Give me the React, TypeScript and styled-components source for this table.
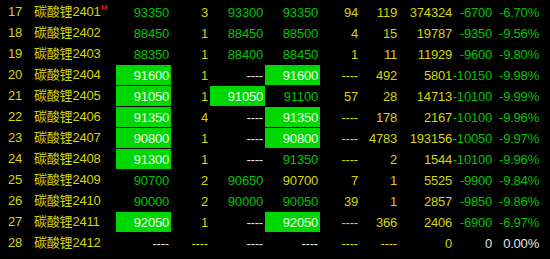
import React from 'react';
import styled, { createGlobalStyle } from 'styled-components';

const GlobalStyle = createGlobalStyle`
  body {
    margin: 0;
    background: #000;
  }
`;

type Tone = 'y' | 'g' | 'w' | 'box';

const colors: Record<Tone, string> = {
  y: '#d6d600',
  g: '#00c400',
  w: '#e6e6e6',
  box: '#f0fff0',
};

const Board = styled.div`
  padding-top: 2px;
  font-family: 'Liberation Sans', 'Noto Sans CJK SC', sans-serif;
  font-size: 13px;
  letter-spacing: -0.2px;
  background: #000;
  width: 550px;
  height: 259px;
  overflow: hidden;
`;

const Row = styled.div`
  display: grid;
  grid-template-columns: 34px 82px 55px 39px 55px 55px 40px 39px 55px 40px 47px;
  height: 20px;
  margin-bottom: 1px;
`;

const NoCell = styled.div`
  padding-left: 8px;
  line-height: 20px;
  color: ${colors.y};
`;

const NameCell = styled.div`
  position: relative;
  line-height: 20px;
  color: ${colors.y};
  white-space: nowrap;
`;

const Mark = styled.span`
  position: absolute;
  left: 67px;
  top: -4px;
  font-size: 8px;
  font-weight: bold;
  letter-spacing: 0;
  color: #e01010;
`;

const Cell = styled.div<{ $tone: Tone }>`
  display: flex;
  justify-content: flex-end;
  align-items: center;
  padding-right: 2px;
  white-space: nowrap;
  color: ${(p) => colors[p.$tone]};
  background: ${(p) => (p.$tone === 'box' ? '#00d600' : 'transparent')};
`;

type C = [string, Tone];

interface Line {
  no: number;
  name: string;
  mark?: boolean;
  cells: C[];
}

const D = '----';

const rows: Line[] = [
  { no: 17, name: '碳酸锂2401', mark: true, cells: [['93350', 'g'], ['3', 'y'], ['93300', 'g'], ['93350', 'g'], ['94', 'y'], ['119', 'y'], ['374324', 'y'], ['-6700', 'g'], ['-6.70%', 'g']] },
  { no: 18, name: '碳酸锂2402', cells: [['88450', 'g'], ['1', 'y'], ['88450', 'g'], ['88500', 'g'], ['4', 'y'], ['15', 'y'], ['19787', 'y'], ['-9350', 'g'], ['-9.56%', 'g']] },
  { no: 19, name: '碳酸锂2403', cells: [['88350', 'g'], ['1', 'y'], ['88400', 'g'], ['88450', 'g'], ['1', 'y'], ['11', 'y'], ['11929', 'y'], ['-9600', 'g'], ['-9.80%', 'g']] },
  { no: 20, name: '碳酸锂2404', cells: [['91600', 'box'], ['1', 'y'], [D, 'w'], ['91600', 'box'], [D, 'y'], ['492', 'y'], ['5801', 'y'], ['-10150', 'g'], ['-9.98%', 'g']] },
  { no: 21, name: '碳酸锂2405', cells: [['91050', 'box'], ['1', 'y'], ['91050', 'box'], ['91100', 'g'], ['57', 'y'], ['28', 'y'], ['14713', 'y'], ['-10100', 'g'], ['-9.99%', 'g']] },
  { no: 22, name: '碳酸锂2406', cells: [['91350', 'box'], ['4', 'y'], [D, 'w'], ['91350', 'box'], [D, 'y'], ['178', 'y'], ['2167', 'y'], ['-10100', 'g'], ['-9.96%', 'g']] },
  { no: 23, name: '碳酸锂2407', cells: [['90800', 'box'], ['1', 'y'], [D, 'w'], ['90800', 'box'], [D, 'y'], ['4783', 'y'], ['193156', 'y'], ['-10050', 'g'], ['-9.97%', 'g']] },
  { no: 24, name: '碳酸锂2408', cells: [['91300', 'box'], ['1', 'y'], [D, 'w'], ['91350', 'g'], [D, 'y'], ['2', 'y'], ['1544', 'y'], ['-10100', 'g'], ['-9.96%', 'g']] },
  { no: 25, name: '碳酸锂2409', cells: [['90700', 'g'], ['2', 'y'], ['90650', 'g'], ['90700', 'y'], ['7', 'y'], ['1', 'y'], ['5525', 'y'], ['-9900', 'g'], ['-9.84%', 'g']] },
  { no: 26, name: '碳酸锂2410', cells: [['90000', 'g'], ['2', 'y'], ['90000', 'g'], ['90050', 'g'], ['39', 'y'], ['1', 'y'], ['2857', 'y'], ['-9850', 'g'], ['-9.86%', 'g']] },
  { no: 27, name: '碳酸锂2411', cells: [['92050', 'box'], ['1', 'y'], [D, 'w'], ['92050', 'box'], [D, 'y'], ['366', 'y'], ['2406', 'y'], ['-6900', 'g'], ['-6.97%', 'g']] },
  { no: 28, name: '碳酸锂2412', cells: [[D, 'w'], [D, 'y'], [D, 'w'], [D, 'w'], [D, 'y'], [D, 'y'], ['0', 'y'], ['0', 'w'], ['0.00%', 'w']] },
];

const App: React.FC = () => (
  <>
    <GlobalStyle />
    <Board>
      {rows.map((r) => (
        <Row key={r.no}>
          <NoCell>{r.no}</NoCell>
          <NameCell>
            {r.name}
            {r.mark && <Mark>M</Mark>}
          </NameCell>
          {r.cells.map(([text, tone], i) => (
            <Cell key={i} $tone={tone}>{text}</Cell>
          ))}
        </Row>
      ))}
    </Board>
  </>
);

export default App;
